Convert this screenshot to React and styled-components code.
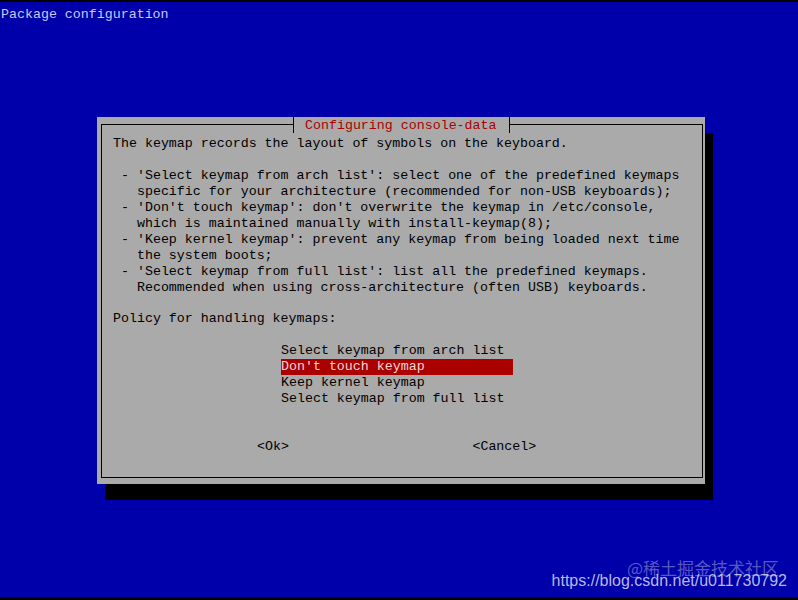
import React from "react";
import styled, { createGlobalStyle } from "styled-components";

const Global = createGlobalStyle`
  html, body { margin: 0; padding: 0; background: #000; }
  body { width: 798px; height: 600px; overflow: hidden; }
`;

const Screen = styled.div`
  position: relative;
  margin-top: 2px;
  height: 595px;
  background: #0000aa;
  padding: 5px 0 0 1px;
  box-sizing: border-box;
  display: flex;
  flex-direction: column;
  align-items: flex-start;
  font-family: "Liberation Mono", "DejaVu Sans Mono", monospace;
  font-size: 13.3px;
  line-height: 15.96px;
`;

const RootTitle = styled.div`
  color: #c8c8ee;
  white-space: pre;
  height: 15.96px;
`;

const Dialog = styled.div`
  margin: 94px 0 0 96px;
  width: 608px;
  height: 367px;
  box-sizing: border-box;
  background: #aaaaaa;
  padding: 7px 2px 6px 4px;
  display: flex;
  box-shadow: 8px 16px 0 #000;
`;

const Frame = styled.div`
  position: relative;
  flex: 1;
  border: 1px solid #000;
  padding: 11px 0 0 11px;
  display: flex;
  flex-direction: column;
  color: #000;
`;

const Title = styled.div`
  position: absolute;
  top: -8px;
  left: 191px;
  height: 16px;
  box-sizing: border-box;
  padding: 1px 12px 0 11px;
  line-height: 15px;
  border-left: 1px solid #000;
  border-right: 1px solid #000;
  background: #aaaaaa;
  color: #aa0000;
  white-space: pre;
`;

const Paragraph = styled.div`
  white-space: pre;
  min-height: 15.96px;
`;

const List = styled.div`
  margin: 15.96px 0 0 168px;
  display: flex;
  flex-direction: column;
  align-items: flex-start;
`;

const Item = styled.div`
  white-space: pre;
  width: 232px;
  height: 15.96px;
  background: ${(p) => (p.$selected ? "#aa0000" : "transparent")};
  color: ${(p) => (p.$selected ? "#f2d4d4" : "#000")};
`;

const Buttons = styled.div`
  margin: 31.92px 0 0 144px;
  display: flex;
  gap: 183.5px;
`;

const Button = styled.div`
  white-space: pre;
`;

const WatermarkCn = styled.div`
  position: absolute;
  right: 19px;
  top: 556px;
  font-family: "Noto Sans CJK SC", "Liberation Sans", sans-serif;
  font-size: 17px;
  line-height: 20px;
  color: rgba(200, 200, 230, 0.45);
  white-space: nowrap;
`;

const WatermarkUrl = styled.div`
  position: absolute;
  right: 11px;
  top: 569px;
  font-family: "Liberation Sans", Arial, sans-serif;
  font-size: 16px;
  line-height: 20px;
  color: rgba(220, 220, 245, 0.85);
  white-space: nowrap;
`;

const body = [
  "The keymap records the layout of symbols on the keyboard.",
  "",
  " - 'Select keymap from arch list': select one of the predefined keymaps",
  "   specific for your architecture (recommended for non-USB keyboards);",
  " - 'Don't touch keymap': don't overwrite the keymap in /etc/console,",
  "   which is maintained manually with install-keymap(8);",
  " - 'Keep kernel keymap': prevent any keymap from being loaded next time",
  "   the system boots;",
  " - 'Select keymap from full list': list all the predefined keymaps.",
  "   Recommended when using cross-architecture (often USB) keyboards.",
  "",
  "Policy for handling keymaps:",
];

const items = [
  "Select keymap from arch list",
  "Don't touch keymap",
  "Keep kernel keymap",
  "Select keymap from full list",
];

export default function App() {
  return (
    <>
      <Global />
      <Screen>
        <RootTitle>Package configuration</RootTitle>
        <Dialog>
          <Frame>
            <Title>Configuring console-data</Title>
            {body.map((l, i) => (
              <Paragraph key={i}>{l}</Paragraph>
            ))}
            <List>
              {items.map((it, i) => (
                <Item key={i} $selected={i === 1}>
                  {it}
                </Item>
              ))}
            </List>
            <Buttons>
              <Button>{"<Ok>"}</Button>
              <Button>{"<Cancel>"}</Button>
            </Buttons>
          </Frame>
        </Dialog>
        <WatermarkCn>@稀土掘金技术社区</WatermarkCn>
        <WatermarkUrl>https://blog.csdn.net/u011730792</WatermarkUrl>
      </Screen>
    </>
  );
}
